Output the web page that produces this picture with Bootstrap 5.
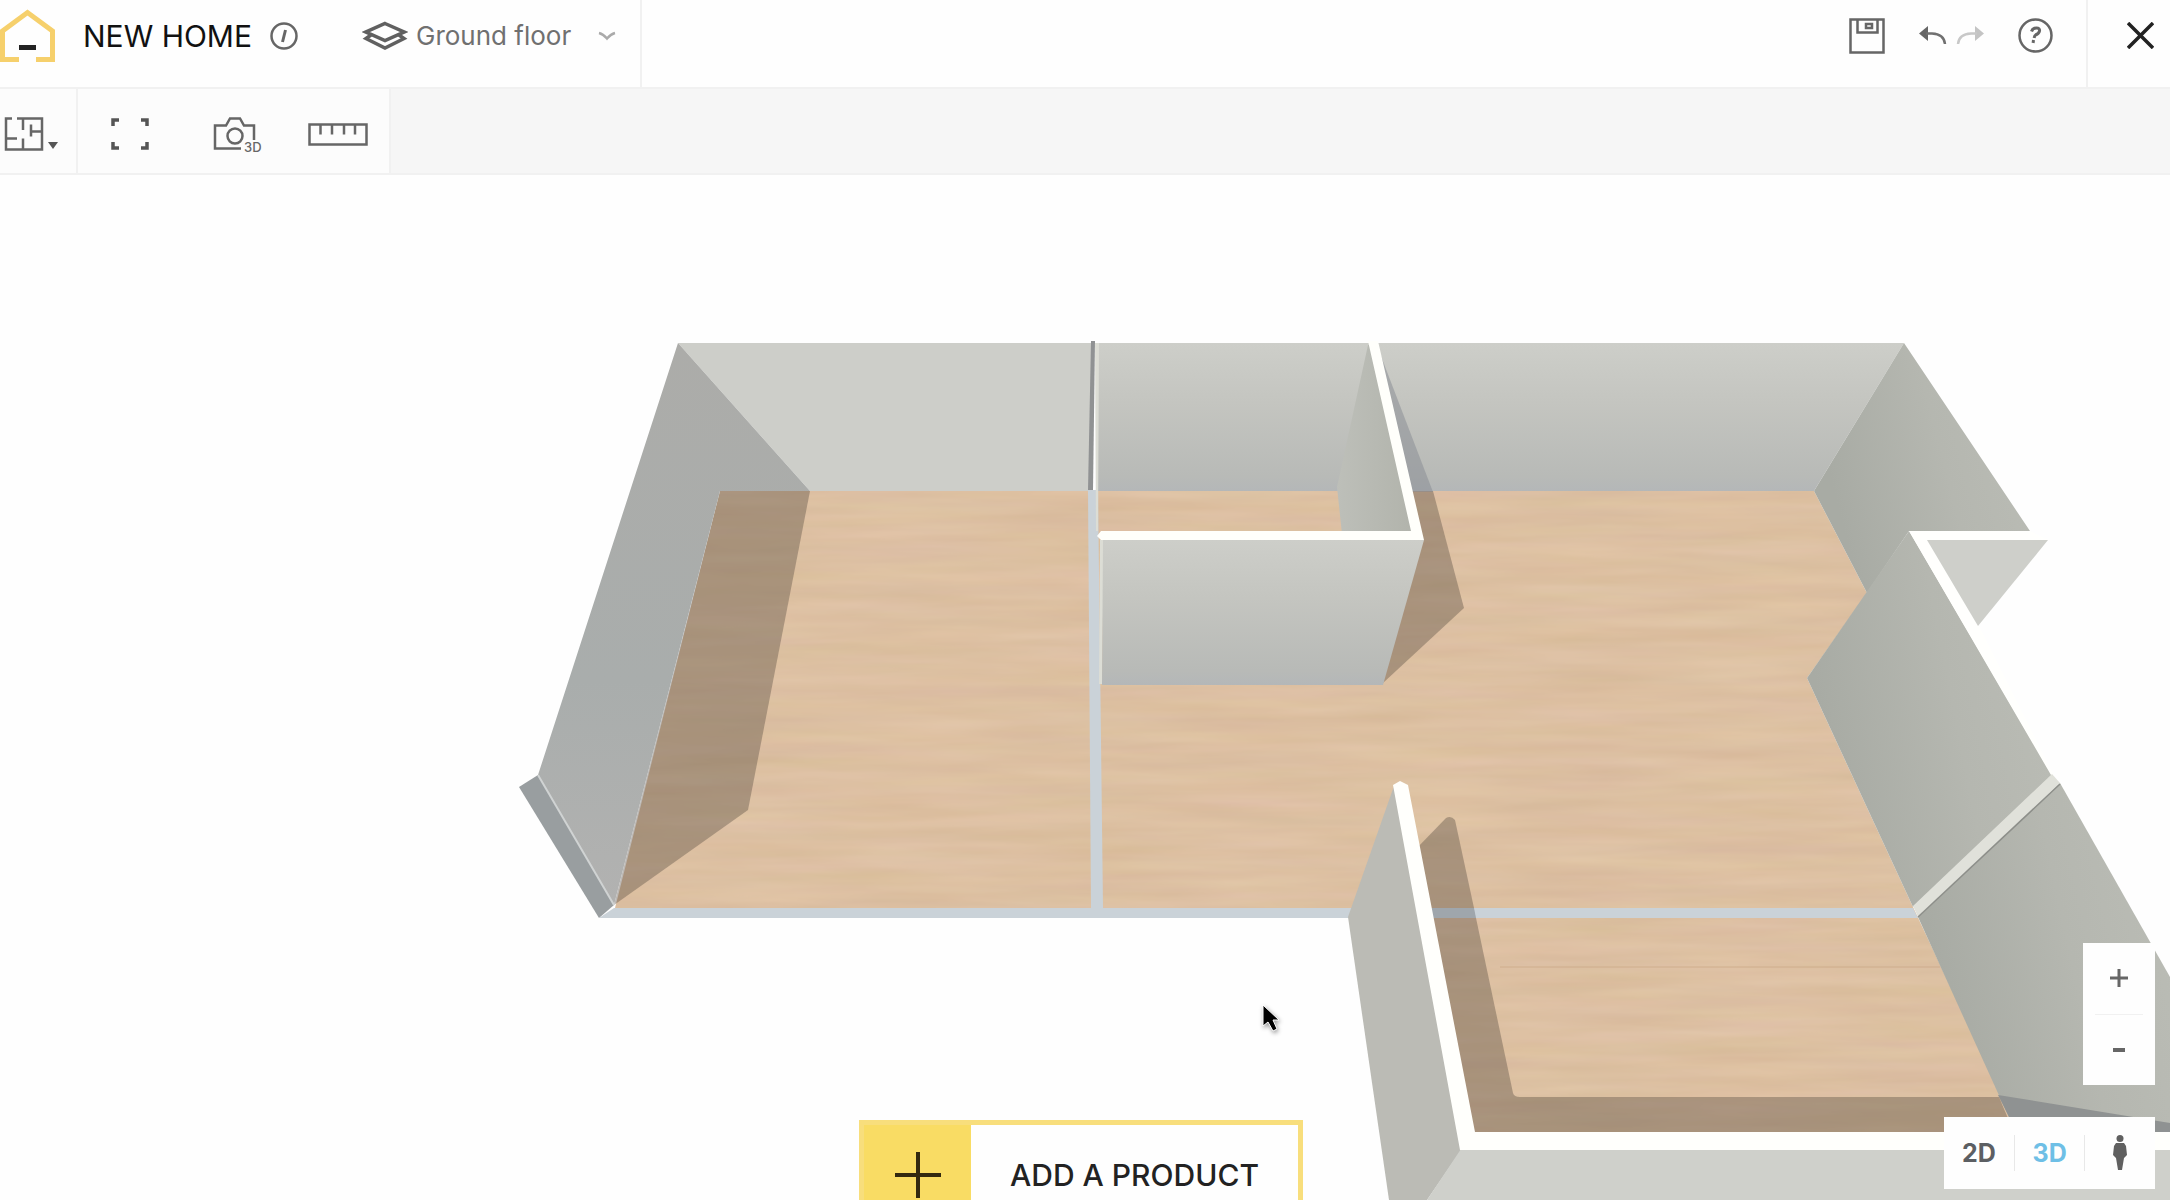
<!DOCTYPE html>
<html lang="en">
<head>
<meta charset="utf-8">
<meta name="viewport" content="width=device-width, initial-scale=1">
<title>New home – floor planner</title>
<link href="https://cdn.jsdelivr.net/npm/bootstrap@5.3.0/dist/css/bootstrap.min.css" rel="stylesheet">
<style>
  body { font-family: Inter, "Liberation Sans", sans-serif; color: #111; background: #fefefe; }
  svg { display: block; flex: none; }
  .ico { fill: none; stroke: #666; stroke-width: 2.5; }
  .bare { border: 0; background: transparent; padding: 0; }
  .topbar { height: 89px; border-bottom: 2px solid #f1f1f1; padding-bottom: 16px; background: #fefefe; }
  .home-name { font-size: 30px; line-height: 32px; font-weight: 400; margin: 0 18px 0 28px; color: #111; }
  .level { gap: 8px; margin-left: 64px; padding-right: 24px; }
  .level select { appearance: none; font-size: 26px; line-height: 32px; color: #707070; width: 174px; }
  .edge-right { border-right: 2px solid #f1f1f1; }
  .edge-left { border-left: 2px solid #f1f1f1; }
  .bleed { margin-bottom: -16px; padding-bottom: 16px; }
  .history { gap: 9px; margin: 0 34px; }
  .close-cell { width: 84px; padding-left: 39px; margin-left: 33px; }
  .toolbar { height: 86px; background: #f6f6f6; border-bottom: 2px solid #f1f1f1; }
  .tool-cell { background: #fcfcfc; padding-top: 6px; }
  .plan-cell { width: 78px; padding-left: 4px; }
  .tools { width: 313px; padding-left: 33px; padding-right: 21px; }
  .stage { min-height: 0; background: #fefefe; }
  .add-product { top: 945px; left: 50%; margin-left: -226px; width: 444px; height: 110px; border: 5px solid #f8de7c; background: #fefefe; color: #222; font-size: 30px; font-weight: 500; line-height: 32px; }
  .add-plus { width: 107px; background: #f9dc64; }
  .controls { right: 15px; bottom: 11px; gap: 32px; }
  .panel-box { background: #fefefe; }
  .zoom-box { width: 72px; height: 142px; }
  .zoom-box button { height: 71px; }
  .zoom-box hr { width: 48px; margin: 0; color: #ccc; }
  .view-box { width: 211px; height: 72px; }
  .view-box button { font-size: 25px; font-weight: 700; line-height: 36px; color: #5c5f63; height: 36px; }
  .view-box button + button { border-left: 1px solid #e8e8e8; }
  .view-box .chosen { color: #6ebfe6; }
</style>
<script src="https://cdn.jsdelivr.net/npm/bootstrap@5.3.0/dist/js/bootstrap.bundle.min.js"></script>
</head>
<body class="vh-100 d-flex flex-column overflow-hidden">

<header class="topbar d-flex align-items-stretch flex-shrink-0">
  <div class="d-flex align-items-center bleed edge-right">
    <a href="#" aria-label="Home">
      <svg width="55" height="54" viewBox="0 0 55 54"><path d="M19 50.500H2.500V22L27.500 3.500 52.500 22V50.500H36" fill="none" stroke="#f6d06c" stroke-width="5"/><path d="M19 38.500h17" stroke="#222" stroke-width="5"/></svg>
    </a>
    <h1 class="home-name text-nowrap">NEW HOME</h1>
    <button class="bare" aria-label="Home information">
      <svg class="ico" width="28" height="28" viewBox="0 0 28 28"><circle cx="14" cy="14" r="12.500"/><path d="M15.500 8l-3 12" stroke-width="3"/></svg>
    </button>
    <div class="level d-flex align-items-center">
      <svg width="46" height="30" viewBox="0 0 46 30" fill="none" stroke="#606060" stroke-width="3.500"><path d="M23 2.500L42 11 23 19.500 4 11z"/><path d="M9 14l-5 3.500 19 9.500 19-9.500-5-3.500"/></svg>
      <select class="bare" aria-label="Floor"><option>Ground floor</option></select>
      <svg class="pe-none" width="18" height="10" viewBox="0 0 18 10" fill="none" stroke="#aaa" stroke-width="2.500"><path d="M1 2Q5 3 9 7.500 13 3 17 2"/></svg>
    </div>
  </div>
  <div class="d-flex align-items-center ms-auto">
    <button class="bare" aria-label="Save"><svg class="ico" width="36" height="36" viewBox="0 0 36 36"><path d="M1.500 1.500h33v33h-33zM8.500 1.500v13h20v-13"/><path d="M17 6h6v4h-6z"/></svg></button>
    <div class="history d-flex">
      <button class="bare" aria-label="Undo"><svg width="28" height="20" viewBox="0 0 28 20"><path d="M0 7.500L9 0v15z" fill="#666"/><path d="M7 7.500h6Q25 8 26 18" fill="none" stroke="#707070" stroke-width="2.500"/></svg></button>
      <button class="bare" aria-label="Redo"><svg width="28" height="20" viewBox="0 0 28 20"><path d="M28 7.500L19 0v15z" fill="#c4c4c4"/><path d="M21 7.500h-6Q3 8 2 18" fill="none" stroke="#c8c8c8" stroke-width="2.500"/></svg></button>
    </div>
    <button class="bare" aria-label="Help"><svg class="ico" width="35" height="35" viewBox="0 0 35 35"><circle cx="17.500" cy="17.500" r="16"/><path d="M13.500 13.500q1-3.500 5-3.500 3.500 0 3 3-.4 2.500-4 4-1 .5-1.300 3M15.500 22l-.4 3" stroke-width="3"/></svg></button>
    <div class="close-cell bleed edge-left align-self-stretch d-flex align-items-center">
      <button class="bare" aria-label="Close"><svg width="27" height="27" viewBox="0 0 27 27" stroke="#222" stroke-width="3.500"><path d="M1 1l25 25M26 1L1 26"/></svg></button>
    </div>
  </div>
</header>

<nav class="toolbar d-flex flex-shrink-0" aria-label="Tools">
  <div class="tool-cell plan-cell edge-right d-flex align-items-center">
    <button class="bare d-flex align-items-end" aria-label="Plan">
      <svg class="ico" width="40" height="34" viewBox="0 0 40 34"><path d="M8 1.500H2V32.500H38V1.500H13M19 1.500V13M19 21.500V32.500M2 21.500H13M27 7.500V19.500M27 14.500H38"/></svg>
      <svg class="ms-1" width="10" height="9" viewBox="0 0 10 9"><path d="M0 0h10L5 7z" fill="#555"/></svg>
    </button>
  </div>
  <div class="tool-cell tools edge-right d-flex align-items-center justify-content-between">
    <button class="bare" aria-label="Fit to screen"><svg width="38" height="32" viewBox="0 0 38 32" fill="none" stroke="#555" stroke-width="3.500"><path d="M2 8V2h6M30 2h6v6M36 24v6h-6M8 30H2v-6"/></svg></button>
    <button class="bare ms-4" aria-label="3D picture"><svg width="56" height="44" viewBox="0 -4 56 44"><path class="ico" d="M28 32.500H2V9.500H13L17 2.500H27L31 9.500H41V24"/><circle class="ico" cx="22" cy="20" r="7.500"/><text x="31" y="36" font-size="13" font-weight="500" fill="#666">3D</text></svg></button>
    <button class="bare" aria-label="Measure"><svg class="ico" width="60" height="23" viewBox="0 0 60 23"><path d="M1.500 1.500h57v20h-57zM12.500 2v9.500M24 2v9.500M36 2v9.500M47 2v9.500"/></svg></button>
  </div>
</nav>

<main class="stage position-relative flex-grow-1 overflow-hidden">
  <svg class="w-100 h-100" viewBox="0 175 2170 1025" preserveAspectRatio="xMidYMin slice" role="img" aria-label="3D view of the ground floor">
    <defs>
      <linearGradient id="back" x1="0" y1="0" x2="0" y2="1"><stop offset="0" stop-color="#cdcec9"/><stop offset=".4" stop-color="#c4c5c0"/><stop offset=".9" stop-color="#b8bab7"/><stop offset="1" stop-color="#b4b7b8"/></linearGradient>
      <linearGradient id="leftw" x1="0" y1="0" x2="0" y2="1"><stop offset="0" stop-color="#acaca9"/><stop offset=".6" stop-color="#a9adac"/><stop offset="1" stop-color="#b2b2b1"/></linearGradient>
      <linearGradient id="side" x1="0" y1=".65" x2="1" y2=".35"><stop offset=".1" stop-color="#a8aba4"/><stop offset=".6" stop-color="#b5b7b0"/><stop offset="1" stop-color="#babcb5"/></linearGradient>
      <linearGradient id="inner" x1="0" y1="0" x2="1" y2="0"><stop offset="0" stop-color="#bdbfb9"/><stop offset="1" stop-color="#b1b3ab"/></linearGradient>
      <filter id="wood" x="0" y="0" width="1" height="1" color-interpolation-filters="sRGB">
        <feTurbulence type="fractalNoise" baseFrequency=".006 .07" numOctaves="3" seed="8"/>
        <feColorMatrix values=".05 0 0 0 .840  .05 .03 0 0 .712  .06 0 .04 0 .584  0 0 0 0 1"/>
        <feComposite in2="SourceGraphic" operator="in"/>
      </filter>
    </defs>
    <!-- floors -->
    <path filter="url(#wood)" fill="#dcc0a1" d="M720 491H1814L1867 593 1807 678 1913 907 2020 1135H1470L1349 912H614z"/>
    <!-- cast shadows on the floor -->
    <g fill="#55493f" fill-opacity=".38">
      <path d="M720 491H810L748 810 614 905z"/>
      <path d="M1400 491H1433L1464 608 1383 683z"/>
    </g>
    <!-- back walls -->
    <path fill="#cdcec9" d="M678 343H1092V491H810z"/>
    <path fill="url(#leftw)" d="M678 343L810 491H720L614 905 538 775z"/>
    <path fill="#999ea0" d="M519 787L538 775 614 905 599 918z"/>
    <path d="M538 775L614 905" stroke="#d0d3d3" stroke-width="2"/>
    <path fill="url(#back)" d="M1097 343H1370V491H1097z"/>
    <path fill="url(#back)" d="M1375 343H1904L1814 491H1375z"/>
    <path fill="#858991" fill-opacity=".5" d="M1376 343L1433 492H1405z"/>
    <!-- low wall strips -->
    <path fill="#cad2d8" d="M599 918L614 908H1353L1349 918zM1420 908H1913L1918 918H1420z"/>
    <path fill="#7b8288" fill-opacity=".55" d="M1420 908H1474L1476 918H1420z"/>
    <path fill="#cad2d8" d="M1088 490H1098L1103 908H1091z"/>
    <path fill="#dcddd5" d="M1095 343H1099L1098 531H1096zM1100 540H1104L1102 684H1099z"/>
    <path fill="#909293" d="M1091 341H1095L1093 490H1088z"/>
    <!-- small room -->
    <path fill="url(#inner)" d="M1368 345L1337 487 1342 534H1416L1374 345z"/>
    <path fill="url(#back)" d="M1103 540H1424L1383 685H1102z"/>
    <path fill="#fffffb" d="M1368 341H1378L1424 540H1101L1097 536 1101 531H1411z"/>
    <!-- right outer walls -->
    <path fill="url(#side)" d="M1904 343L2030 531H1909L1867 593 1814 491z"/>
    <path fill="url(#side)" d="M1909 531L1807 678 1913 907 2052 775z"/>
    <path fill="#fffffd" d="M1909 531H2030L2048 540H1927L1979 626 2054 776 2051 775z"/>
    <path fill="#cecfca" d="M1927 540H2048L1978 626z"/>
    <path fill="url(#side)" d="M1918 917L2060 783 2170 977V1135H2017z"/>
    <path fill="#8f9292" d="M1998 1095L2170 1123V1135H2018z"/>
    <path fill="#e0e1da" d="M1913 906L2052 774 2060 783 1918 917z"/>
    <path d="M1918 917L2060 784" stroke="#8d8f8a" stroke-width="1.500"/>
    <!-- lower room -->
    <g fill="#55493f" fill-opacity=".38">
      <path d="M1415 850L1446 818Q1451 815 1455 820L1474 908H1425z"/>
      <path d="M1425 918H1476L1513 1093Q1514 1097 1520 1097H1999L2015 1135H1470z"/>
    </g>
    <path d="M1500 967H1940" stroke="#c9a684" stroke-width="1" stroke-opacity=".7"/>
    <path fill="#bbbbb5" d="M1394 786L1348 917 1389 1200H1427L1462 1149z"/>
    <path fill="#cfd0cb" d="M1461 1149H2170V1200H1427z"/>
    <path fill="#fffffc" d="M1393 785L1400 781 1408 785 1475 1132H2170V1150H1460z"/>
    <!-- mouse pointer -->
    <path d="M1263 1005V1026L1268 1022 1273 1031 1277 1029 1273 1020H1279z" stroke="#fff" stroke-width="1" filter="drop-shadow(1px 2px 2px #999)"/>
  </svg>

  <button class="add-product position-absolute d-flex align-items-stretch p-0">
    <span class="add-plus d-flex align-items-center justify-content-center"><svg width="46" height="46" viewBox="0 0 46 46" stroke="#33290f" stroke-width="4"><path d="M23 0v46M0 23h46"/></svg></span>
    <span class="flex-grow-1 d-flex align-items-center justify-content-center text-nowrap">ADD A PRODUCT</span>
  </button>

  <div class="controls position-absolute d-flex flex-column align-items-end">
    <div class="panel-box zoom-box d-flex flex-column align-items-center">
      <button class="bare w-100 d-flex align-items-center justify-content-center" aria-label="Zoom in"><svg width="20" height="20" viewBox="0 0 20 20" stroke="#666" stroke-width="3"><path d="M10 1v18M1 10h18"/></svg></button>
      <hr>
      <button class="bare w-100 d-flex align-items-center justify-content-center" aria-label="Zoom out"><svg width="12" height="4" viewBox="0 0 12 4"><path d="M0 0h12v4H0z" fill="#666"/></svg></button>
    </div>
    <div class="panel-box view-box d-flex align-items-center">
      <button class="bare flex-fill w-100">2D</button>
      <button class="bare flex-fill w-100 chosen">3D</button>
      <button class="bare flex-fill w-100 d-flex align-items-center justify-content-center" aria-label="Walk through"><svg width="14" height="36" viewBox="0 0 14 36" fill="#606060"><circle cx="7" cy="3.500" r="3.500"/><path d="M3 8h8l2 3 1 9-3 3-2 12H5L3 23l-3-3 1-9z"/></svg></button>
    </div>
  </div>
</main>
</body>
</html>
